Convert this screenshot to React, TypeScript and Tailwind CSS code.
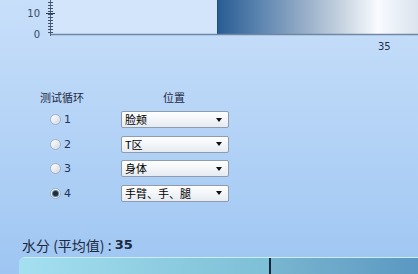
import React from 'react';

const rows = [
  { n: '1', place: '脸颊', checked: false },
  { n: '2', place: 'T区', checked: false },
  { n: '3', place: '身体', checked: false },
  { n: '4', place: '手臂、手、腿', checked: true },
];

const cjk = { fontFamily: '"Noto Sans CJK SC", "DejaVu Sans", sans-serif' };
const latin = { fontFamily: '"DejaVu Sans", "Liberation Sans", sans-serif' };

const Chart: React.FC = () => {
  const ticks = [];
  for (let y = 2; y <= 34; y += 3) ticks.push(y);
  return (
    <div className="relative h-[52px] w-full">
      <svg width="418" height="52" className="absolute left-0 top-0">
        <defs>
          <linearGradient id="bar" x1="0" x2="1" y1="0" y2="0">
            <stop offset="0" stopColor="#275c93" />
            <stop offset="0.2" stopColor="#5882ae" />
            <stop offset="0.42" stopColor="#93abc6" />
            <stop offset="0.62" stopColor="#c6d3e0" />
            <stop offset="0.8" stopColor="#f9fbff" />
            <stop offset="0.9" stopColor="#e9eff6" />
            <stop offset="1" stopColor="#dbe3ee" />
          </linearGradient>
        </defs>
        <rect x="51" y="0" width="167" height="34" fill="#d2e5fb" />
        <rect x="217" y="0" width="201" height="34" fill="url(#bar)" />
        <line x1="217.5" y1="0" x2="217.5" y2="34" stroke="#1f4f80" strokeWidth="1" />
        <line x1="50" y1="34.5" x2="418" y2="34.5" stroke="#6f87a3" strokeWidth="1.6" />
        <line x1="50.5" y1="0" x2="50.5" y2="36" stroke="#52657d" strokeWidth="1" />
        {ticks.map(y => (
          <line key={y} x1="48" y1={y + 0.5} x2="53" y2={y + 0.5} stroke="#3f536b" strokeWidth="1" />
        ))}
        <line x1="46" y1="13.5" x2="55" y2="13.5" stroke="#2c3e55" strokeWidth="1" />
      </svg>
      <span className="absolute right-[378px] top-[8px] text-[10px] leading-[12px] text-[#3a4a63]" style={latin}>10</span>
      <span className="absolute right-[378px] top-[29px] text-[10px] leading-[12px] text-[#3a4a63]" style={latin}>0</span>
      <span className="absolute left-[378px] top-[41px] text-[10px] leading-[12px] text-[#22324c]" style={latin}>35</span>
    </div>
  );
};

const Radio: React.FC<{ checked: boolean }> = ({ checked }) => (
  <span className="flex h-[11px] w-[11px] items-center justify-center rounded-full border border-[#a3b1c2] bg-gradient-to-br from-[#ffffff] to-[#d3dae3]">
    {checked && <span className="h-[5px] w-[5px] rounded-full bg-[#1d2f3e] ring-1 ring-[#5a7a94]" />}
  </span>
);

const Select: React.FC<{ value: string }> = ({ value }) => (
  <div className="flex h-[17px] w-[108px] items-center justify-between rounded-[2px] border border-[#8e9cae] bg-gradient-to-b from-[#ffffff] to-[#e6ebf1] pl-[3px] pr-[6px]">
    <span className="text-[11px] leading-[13px] text-black" style={cjk}>{value}</span>
    <svg width="6" height="4" viewBox="0 0 6 4">
      <path d="M0 0 H6 L3 4 Z" fill="#111" />
    </svg>
  </div>
);

export default function App() {
  return (
    <div className="flex h-[274px] w-[418px] flex-col overflow-hidden bg-gradient-to-b from-[#c8dffa] to-[#9ec6f2]">
      <Chart />
      <div className="mt-[38px] flex flex-col pl-[40px]">
        <div className="flex h-[14px] items-center text-[11px] leading-[14px] text-[#1f2b44]" style={cjk}>
          <span className="w-[123px]">测试循环</span>
          <span>位置</span>
        </div>
        <div className="mt-[7px] flex flex-col gap-[7.5px]">
          {rows.map(r => (
            <div key={r.n} className="flex h-[17px] items-center">
              <div className="ml-[10px] flex w-[71px] items-center gap-[3px]">
                <Radio checked={r.checked} />
                <span className="text-[11px] leading-[13px] text-[#23325a]" style={latin}>{r.n}</span>
              </div>
              <Select value={r.place} />
            </div>
          ))}
        </div>
      </div>
      <div className="ml-[22px] mt-[35px] flex h-[16px] items-center text-[14px] leading-[16px] text-[#1c2a40]" style={cjk}>
        水分 (平均值) : <span className="ml-[3px] font-bold text-[13px]" style={latin}>35</span>
      </div>
      <div className="ml-[19px] mt-[4px] flex h-[18px] flex-1 overflow-hidden rounded-tl-[6px] border-t border-[#c9eefa]">
        <div className="w-[250px] bg-gradient-to-r from-[#a4e0f0] to-[#7dbfd6]" />
        <div className="w-[2px] bg-[#17263a]" />
        <div className="flex-1 bg-gradient-to-r from-[#79b6d0] to-[#5b98c2]" />
      </div>
    </div>
  );
}
